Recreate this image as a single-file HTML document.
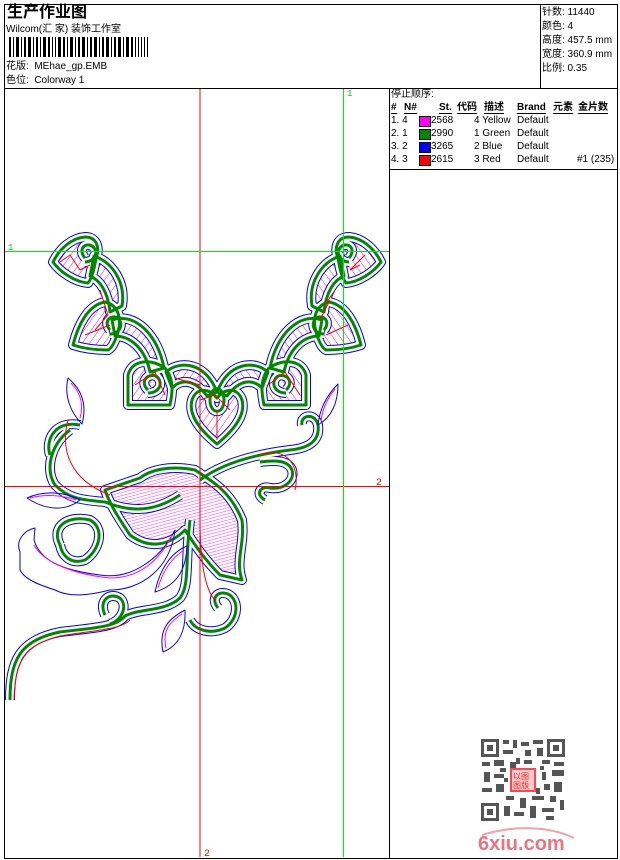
<!DOCTYPE html>
<html><head><meta charset="utf-8"><style>
*{margin:0;padding:0}
body{width:620px;height:860px;background:#fff;position:relative;overflow:hidden;font-family:"Liberation Sans","Noto Sans CJK SC",sans-serif;color:#000}
.a{position:absolute;white-space:nowrap}
.s{font-size:10px;line-height:12px}
.h span{border-bottom:1px solid #000;line-height:11px}
</style></head><body>
<div class="a" style="left:4px;top:4px;width:612px;height:853px;border:1px solid #000"></div>
<div class="a" style="left:4px;top:88px;width:613px;height:1px;background:#000"></div>
<div class="a" style="left:540px;top:4px;width:1px;height:84px;background:#000"></div>
<div class="a" style="left:389px;top:88px;width:1px;height:770px;background:#000"></div>
<div class="a" style="left:389px;top:169px;width:228px;height:1px;background:#000"></div>

<div class="a" style="left:7px;top:3px;font-size:16px;font-weight:bold;line-height:20px">生产作业图</div>
<div class="a s" style="left:6px;top:24px">Wilcom(汇 家) 装饰工作室</div>
<svg class="a" style="left:9px;top:37px" width="142" height="20">
<g fill="#000">
<rect x="0" y="0" width="2" height="20"/><rect x="4" y="0" width="1" height="20"/><rect x="7" y="0" width="3" height="20"/><rect x="12" y="0" width="1" height="20"/><rect x="15" y="0" width="2" height="20"/><rect x="19" y="0" width="3" height="20"/><rect x="24" y="0" width="1" height="20"/><rect x="27" y="0" width="2" height="20"/><rect x="31" y="0" width="1" height="20"/><rect x="34" y="0" width="3" height="20"/><rect x="39" y="0" width="2" height="20"/><rect x="43" y="0" width="1" height="20"/><rect x="46" y="0" width="1" height="20"/><rect x="49" y="0" width="3" height="20"/><rect x="54" y="0" width="2" height="20"/><rect x="58" y="0" width="1" height="20"/><rect x="61" y="0" width="3" height="20"/><rect x="66" y="0" width="1" height="20"/><rect x="69" y="0" width="2" height="20"/><rect x="73" y="0" width="3" height="20"/><rect x="78" y="0" width="1" height="20"/><rect x="81" y="0" width="2" height="20"/><rect x="85" y="0" width="3" height="20"/><rect x="90" y="0" width="1" height="20"/><rect x="93" y="0" width="2" height="20"/><rect x="97" y="0" width="3" height="20"/><rect x="102" y="0" width="1" height="20"/><rect x="105" y="0" width="2" height="20"/><rect x="109" y="0" width="3" height="20"/><rect x="114" y="0" width="1" height="20"/><rect x="117" y="0" width="3" height="20"/><rect x="122" y="0" width="2" height="20"/><rect x="126" y="0" width="1" height="20"/><rect x="129" y="0" width="1" height="20"/><rect x="132" y="0" width="1" height="20"/><rect x="135" y="0" width="1" height="20"/><rect x="138" y="0" width="1" height="20"/>
</g></svg>
<div class="a s" style="left:6px;top:61px">花版:&nbsp; MEhae_gp.EMB</div>
<div class="a s" style="left:6px;top:75px">色位:&nbsp; Colorway 1</div>

<div class="a s" style="left:542px;top:6px;line-height:14px">针数: 11440<br>颜色: 4<br>高度: 457.5 mm<br>宽度: 360.9 mm<br>比例: 0.35</div>

<div class="a s" style="left:391px;top:89px">停止顺序:</div>
<div class="a s h" style="left:391px;top:102px;font-weight:bold">
<span class="a" style="left:0">#</span><span class="a" style="left:13px">N#</span><span class="a" style="left:48px">St.</span><span class="a" style="left:66px">代码</span><span class="a" style="left:93px">描述</span><span class="a" style="left:126px">Brand</span><span class="a" style="left:162px">元素</span><span class="a" style="left:187px">金片数</span></div>
<div class="a s" style="left:391px;top:115px;width:226px">
<div style="position:relative;height:13px"><span class="a" style="left:0">1. 4</span><span class="a" style="left:28px;top:1px;width:10px;height:9px;background:#f0f;border:1px solid #000"></span><span class="a" style="left:40px">2568</span><span class="a" style="left:83px">4 Yellow</span><span class="a" style="left:126px">Default</span></div>
<div style="position:relative;height:13px"><span class="a" style="left:0">2. 1</span><span class="a" style="left:28px;top:1px;width:10px;height:9px;background:#080;border:1px solid #000"></span><span class="a" style="left:40px">2990</span><span class="a" style="left:83px">1 Green</span><span class="a" style="left:126px">Default</span></div>
<div style="position:relative;height:13px"><span class="a" style="left:0">3. 2</span><span class="a" style="left:28px;top:1px;width:10px;height:9px;background:#00f;border:1px solid #000"></span><span class="a" style="left:40px">3265</span><span class="a" style="left:83px">2 Blue</span><span class="a" style="left:126px">Default</span></div>
<div style="position:relative;height:13px"><span class="a" style="left:0">4. 3</span><span class="a" style="left:28px;top:1px;width:10px;height:9px;background:#f00;border:1px solid #000"></span><span class="a" style="left:40px">2615</span><span class="a" style="left:83px">3 Red</span><span class="a" style="left:126px">Default</span><span class="a" style="left:186px">#1 (235)</span></div>
</div>

<svg class="a" style="left:0;top:0" width="390" height="860">
<defs>
<pattern id="hm" width="6" height="6" patternUnits="userSpaceOnUse" patternTransform="rotate(35)">
<rect width="6" height="6" fill="#fff"/><line x1="0" y1="0" x2="0" y2="6" stroke="#f0f" stroke-width="1"/></pattern>
<pattern id="hf" width="3" height="6" patternUnits="userSpaceOnUse" patternTransform="rotate(75)">
<rect width="3" height="6" fill="#fff"/><line x1="0" y1="0" x2="0" y2="6" stroke="#f0f" stroke-width="0.8"/></pattern>
<g id="half">
<path d="M53,262 C60,248 72,238 85,237 C97,237 100,248 96,258 C94,270 92,278 88,283 C75,282 60,272 53,262 Z"/>
<path d="M94,256 C112,262 126,282 122,306 L110,312 C108,292 100,280 90,276 Z"/>
<path d="M73,345 C78,325 88,305 105,302 C118,305 122,318 118,332 C115,342 112,348 108,350 C95,350 82,348 73,345 Z"/>
<path d="M112,320 C135,312 158,335 164,368 L150,372 C145,348 130,336 115,336 Z"/>
<path d="M128,405 L128,375 C132,360 150,358 165,368 C175,380 172,395 170,405 Z"/>
<path d="M166,372 C180,360 205,362 217,392 L207,396 C195,380 182,378 172,388 Z"/>
</g>
<g id="spirs">
<path d="M85,258 C78,250 84,242 92,246 C100,252 94,262 85,262"/>
<path d="M110,330 C103,322 110,314 118,318 C124,324 120,334 110,334"/>
<path d="M148,390 C140,383 146,373 156,376 C164,382 160,393 148,393"/>
</g>
<path id="ht" d="M217,444 C200,430 188,415 192,400 C196,388 208,387 217,398 C226,387 238,388 242,400 C246,415 234,430 217,444 Z"/>
<path id="hti" d="M210,400 C210,385 224,385 224,400 C224,415 210,415 210,400"/>
<path id="stem" d="M10,700 C10,660 20,640 60,632 C90,628 115,628 125,616 C140,608 165,612 180,598 C190,585 185,560 190,520"/>
<path id="vine" d="M70,430 C50,445 45,470 55,485 C70,500 85,500 105,502 C125,510 150,515 180,495"/>
<path id="vtop" d="M80,425 C55,420 45,440 50,455"/>
<path id="loop" d="M60,545 C50,525 70,515 90,520 C105,528 100,550 85,560 C70,565 62,555 60,545"/>
<path id="rv" d="M200,480 C220,465 250,455 290,450 C310,448 320,440 318,425 C315,412 300,415 302,425"/>
<path id="rs" d="M265,500 C255,495 260,485 270,488 C285,490 295,480 292,470 C288,460 275,460 260,462"/>
<path id="fl" d="M105,490 L140,478 C150,470 170,465 195,470 C210,480 230,490 242,520 C245,545 235,560 242,580 L220,575 C205,560 195,545 185,530 C170,545 150,550 130,535 C120,520 110,505 105,490 Z"/>
<path id="sp2" d="M105,615 C98,600 110,592 120,598 C128,606 122,620 110,624"/>
<path id="sp3" d="M218,608 C210,598 218,590 228,594 C240,600 238,620 225,628 C210,635 195,630 190,620"/>
<g id="all">
<use href="#half"/><use href="#half" transform="translate(434,0) scale(-1,1)"/>
<use href="#spirs"/><use href="#spirs" transform="translate(434,0) scale(-1,1)"/>
<use href="#ht"/><use href="#hti"/><use href="#stem"/><use href="#vine"/><use href="#vtop"/><use href="#loop"/><use href="#rv"/><use href="#rs"/><use href="#fl"/><use href="#sp2"/><use href="#sp3"/>
</g>
</defs>
<g stroke-linejoin="round">
<g fill="url(#hm)" stroke="none"><use href="#half"/><use href="#half" transform="translate(434,0) scale(-1,1)"/><use href="#ht"/></g>
<use href="#fl" fill="url(#hf)"/>
<g fill="none">
<use href="#all" stroke="#00f" stroke-width="10"/>
<use href="#all" stroke="#fff" stroke-width="8"/>
<use href="#all" stroke="#080" stroke-width="3"/>
</g>
<g fill="none" stroke="#00f" stroke-width="1">
<path d="M68,378 C80,388 88,402 82,424 C70,412 64,395 68,378 Z"/><path d="M27,498 C45,490 65,492 80,500 C65,512 45,510 27,498 Z"/><path d="M155,592 C160,568 172,552 187,546 C186,572 175,586 155,592 Z"/><path d="M163,652 C158,628 170,618 185,610 C186,632 178,646 163,652 Z"/><path d="M318,425 C320,405 330,392 338,384 C338,405 330,418 318,425 Z"/>
<path d="M20,552 C15,540 25,530 35,528 L34,540 C40,560 60,570 100,575 C130,580 160,560 175,530 C170,570 140,590 110,590 C90,595 70,598 55,590 C40,585 25,580 20,570 Z"/></g>
<g fill="none" stroke="#f0f" stroke-width="1">
<path d="M71,383 C80,392 84,404 80,418 M30,498 C45,494 62,495 76,500 M158,588 C163,570 172,558 184,550 M166,648 C162,630 170,622 182,614 M321,421 C323,405 330,395 335,389"/>
<path d="M34,545 C45,565 80,575 110,578 C140,578 160,560 172,535"/></g>
<g fill="none" stroke="#f00" stroke-width="1">
<path d="M14,700 C15,660 25,645 60,636 C95,630 120,630 130,620 M68,420 C60,450 70,480 110,495 M260,455 C290,445 300,470 295,490 M200,520 C200,560 205,590 215,600"/>
<path d="M60,262 L70,255 L80,270 L90,265 M100,290 L108,315 L95,330 M85,335 L110,325 M135,385 L155,372 L165,395 M175,378 L200,385 M200,400 L215,395 L230,410 M217,410 L217,440 M268,385 L285,372 L300,395 M330,300 L320,320 M326,335 L348,325 M360,265 L350,270 L365,255 M335,290 L325,305"/></g>
</g>
<line x1="200" y1="89" x2="200" y2="857" stroke="#f00" stroke-width="1"/>
<line x1="5" y1="486.5" x2="389" y2="486.5" stroke="#f00" stroke-width="1"/>
<line x1="343.5" y1="89" x2="343.5" y2="857" stroke="#0e0" stroke-width="1"/>
<line x1="5" y1="251.5" x2="389" y2="251.5" stroke="#0e0" stroke-width="1"/>
<text x="8" y="250" font-size="9" fill="#0c0" font-family="Liberation Mono,monospace">1</text>
<text x="347" y="96" font-size="9" fill="#0c0" font-family="Liberation Mono,monospace">1</text>
<text x="376" y="485" font-size="10" fill="#f00" font-family="Liberation Mono,monospace">2</text>
<text x="204" y="856" font-size="10" fill="#f00" font-family="Liberation Mono,monospace">2</text>
</svg>

<svg class="a" style="left:480px;top:738px" width="86" height="84">
<rect width="86" height="84" fill="#fff"/>
<g fill="#555">
<rect x="1" y="1" width="18" height="18"/><rect x="67" y="1" width="18" height="18"/><rect x="1" y="65" width="18" height="18"/>
</g>
<g fill="#fff"><rect x="4" y="4" width="12" height="12"/><rect x="70" y="4" width="12" height="12"/><rect x="4" y="68" width="12" height="12"/></g>
<g fill="#555"><rect x="7" y="7" width="6" height="6"/><rect x="73" y="7" width="6" height="6"/><rect x="7" y="71" width="6" height="6"/>
<path d="M23 2h6v4h-6zM33 2h4v8h-4zM41 4h8v4h-8zM53 2h10v4h-10zM23 12h10v4h-10zM45 12h6v6h-6zM57 10h6v8h-6zM2 24h8v4h-8zM14 22h10v6h-10zM30 24h6v8h-6zM62 22h8v4h-8zM74 24h10v4h-10zM4 34h6v10h-6zM14 36h10v4h-10zM62 34h4v8h-4zM72 32h12v6h-12zM2 50h10v4h-10zM16 46h8v8h-8zM64 46h6v6h-6zM74 44h8v10h-8zM26 58h8v4h-8zM40 60h6v10h-6zM52 58h12v4h-12zM70 58h6v6h-6zM80 62h4v10h-4zM24 68h6v10h-6zM34 74h10v4h-10zM50 68h6v12h-6zM62 70h12v4h-12zM66 78h8v4h-8zM24 40h4v4h-4zM60 28h4v4h-4zM36 20h4v6h-4zM44 22h8v4h-8zM20 30h6v4h-6zM56 50h4v6h-4z"/></g>
<rect x="30" y="30" width="26" height="24" fill="#f45"/>
<rect x="32" y="32" width="22" height="20" fill="#fcc"/>
<text x="33" y="41" font-size="8" fill="#e22" font-family="Noto Sans CJK SC,sans-serif">以图</text>
<text x="33" y="50" font-size="8" fill="#e22" font-family="Noto Sans CJK SC,sans-serif">图版</text>
</svg>
<svg class="a" style="left:474px;top:826px" width="104" height="28">
<path d="M8,9 C40,-1 75,0 100,12" stroke="#f6a0a8" stroke-width="2" fill="none"/>
<text x="4" y="24" font-size="20" font-weight="bold" fill="#f1727c" font-family="Liberation Sans,sans-serif">6xiu.com</text>
</svg>
</body></html>
